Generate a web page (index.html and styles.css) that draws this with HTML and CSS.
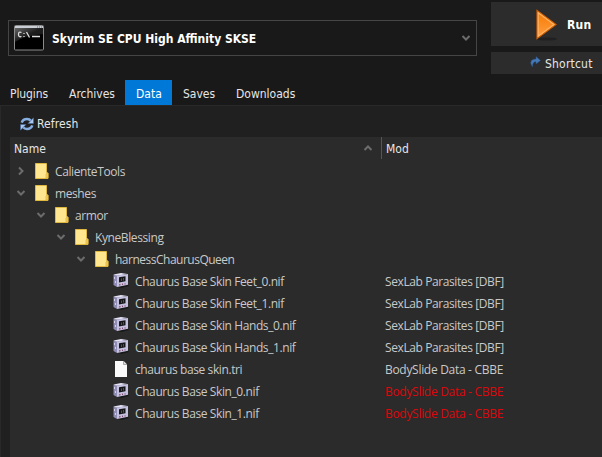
FILE: index.html
```html
<!DOCTYPE html>
<html lang="en">
<head>
  <meta charset="UTF-8">
  <meta name="viewport" content="width=device-width, initial-scale=1.0">
  <title>Data</title>
  <link rel="stylesheet" href="styles.css">
</head>
<body>
  <!-- shared icons -->
  <svg class="sprites" width="0" height="0">
    <symbol id="chevron-down" viewBox="0 0 10 8"><path d="M1.5 2 L5 5.5 L8.5 2" fill="none" stroke="currentColor" stroke-width="2"/></symbol>
    <symbol id="chevron-right" viewBox="0 0 8 10"><path d="M2 1.5 L5.5 5 L2 8.5" fill="none" stroke="currentColor" stroke-width="2"/></symbol>
    <symbol id="folder" viewBox="0 0 14 16">
      <path d="M0.5 0.5 H11.5 V9 L13 10.5 V15.5 H0.5 Z" fill="#ffe68f" stroke="#dfb83f"/>
      <path d="M11 15 V11 L12 10 H13 V15 Z" fill="#f5cf59" stroke="#dcb03a" stroke-width=".7"/>
    </symbol>
    <symbol id="nif" viewBox="0 0 16 16">
      <path d="M5 14 L15 12 L16 13 L8 15 Z" fill="#171719"/>
      <path d="M0.5 1.5 L4 2.5 V14 L0.5 12 Z" fill="#8f8bb3"/>
      <path d="M0.5 1.5 L8 0 L14.5 1 L4 2.8 Z" fill="#e4e1f5"/>
      <path d="M4 2.6 L15 1 V11.8 L4 14 Z" fill="#c4c1df"/>
      <path d="M6 4.3 L12.5 3.2 V8.3 L6 9.4 Z" fill="#141618"/>
      <path d="M8.5 8 V5.5 M10.5 7.5 V5" fill="none" stroke="#2d6b38"/>
      <path d="M6 12 L7.5 11.7 M9 11.4 L10 11.2 M11.5 11 L12.5 10.8" stroke="#7d4067" stroke-width="1.2"/>
      <path d="M1.5 4 V6 M2.5 8 V10" stroke="#d0cde9"/>
    </symbol>
    <symbol id="page" viewBox="0 0 12 16">
      <path d="M0 0 H8.5 L12 3.5 V16 H0 Z" fill="#fafafa"/>
      <path d="M8.5 0 V3.5 H12" fill="#ddd" stroke="#999" stroke-width=".8"/>
    </symbol>
  </svg>

  <div class="launcher">
    <div class="executable">
      <svg class="console-icon" viewBox="0 0 30 26">
        <defs>
          <linearGradient id="glass" x1="0" y1="0" x2="1" y2="1"><stop offset="0" stop-color="#666"/><stop offset=".5" stop-color="#1c1c1c"/></linearGradient>
        </defs>
        <rect x=".5" y=".5" width="29" height="24.5" rx="1" fill="#000" stroke="#8b8b8b"/>
        <path d="M1 3 H29 V9 Q12 10 1 17 Z" fill="url(#glass)"/>
        <rect x="1" y="1" width="28" height="2" fill="#c9ced5"/>
        <path d="M23 2 H28" stroke="#69717b" stroke-dasharray="1 1"/>
        <path d="M7.5 7.5 Q4.5 6 4.5 9.5 Q4.5 12.5 7.5 11.5 M10 8 V9 M10 11 V12 M12.5 7 L15.5 12.5 M18 11.5 H26" fill="none" stroke="#ddd" stroke-width="1.3"/>
      </svg>
      <span class="executable-name">Skyrim SE CPU High Affinity SKSE</span>
      <svg class="chevron combo-arrow"><use href="#chevron-down"/></svg>
    </div>
    <div class="actions">
      <div class="button run">
        <svg class="run-icon" viewBox="0 0 24 32">
          <defs>
            <linearGradient id="orange" x1="0" y1="0" x2="0" y2="1"><stop offset="0" stop-color="#f57900"/><stop offset="1" stop-color="#ffa044"/></linearGradient>
          </defs>
          <ellipse cx="12" cy="30" rx="10" ry="1.6" fill="#202020"/>
          <path d="M2 1.5 L21 15.5 L2 29.5 Z" fill="url(#orange)" stroke="#ce5c00" stroke-width="1.2"/>
          <path d="M3.2 3.7 L19 15.5 L3.2 27.2 Z" fill="none" stroke="#fcb46a" stroke-width="1.1"/>
        </svg>
        <span class="run-label">Run</span>
      </div>
      <div class="button shortcut">
        <svg class="shortcut-icon" viewBox="0 0 11 12"><path d="M2.5 11 Q-.5 7 1.5 4.5 Q3 2.8 6 3 V.5 L10.5 4.5 L6 8 V5.8 Q2.5 5.6 2.5 11 Z" fill="#4479b8" stroke="#2b4f7c" stroke-width=".5"/></svg>
        <span class="shortcut-label">Shortcut</span>
      </div>
    </div>
  </div>

  <div class="tabs">
    <div class="tab plugins"><span>Plugins</span></div>
    <div class="tab archives"><span>Archives</span></div>
    <div class="tab active"><span>Data</span></div>
    <div class="tab saves"><span>Saves</span></div>
    <div class="tab downloads"><span>Downloads</span></div>
  </div>

  <div class="panel">
    <div class="refresh">
      <svg class="refresh-icon" viewBox="0 0 14 14">
        <g fill="none" stroke="#86aee0" stroke-width="2.6"><path d="M1.7 5.6 Q3 2 7 2 Q9.5 2 11.2 4"/><path d="M12.3 8.4 Q11 12 7 12 Q4.5 12 2.8 10"/></g>
        <path d="M13.5 .8 V6.5 H8 Z M.5 13.2 V7.5 H6 Z" fill="#a9c8ee" stroke="#3c6396" stroke-width=".5"/>
      </svg>
      <span class="refresh-label">Refresh</span>
    </div>
    <div class="tree">
      <div class="tree-header">
        <div class="col-name"><span>Name</span><svg class="chevron sort"><use href="#chevron-down"/></svg></div>
        <div class="col-mod">Mod</div>
      </div>
      <div class="row"><div class="cell"><svg class="chevron right"><use href="#chevron-right"/></svg><svg class="folder"><use href="#folder"/></svg><span>CalienteTools</span></div></div>
      <div class="row"><div class="cell"><svg class="chevron"><use href="#chevron-down"/></svg><svg class="folder"><use href="#folder"/></svg><span>meshes</span></div></div>
      <div class="row"><div class="cell level-1"><svg class="chevron"><use href="#chevron-down"/></svg><svg class="folder"><use href="#folder"/></svg><span>armor</span></div></div>
      <div class="row"><div class="cell level-2"><svg class="chevron"><use href="#chevron-down"/></svg><svg class="folder"><use href="#folder"/></svg><span>KyneBlessing</span></div></div>
      <div class="row"><div class="cell level-3"><svg class="chevron"><use href="#chevron-down"/></svg><svg class="folder"><use href="#folder"/></svg><span class="long">harnessChaurusQueen</span></div></div>
      <div class="row"><div class="cell file"><svg class="nif"><use href="#nif"/></svg><span>Chaurus Base Skin Feet_0.nif</span></div><div class="mod">SexLab Parasites [DBF]</div></div>
      <div class="row"><div class="cell file"><svg class="nif"><use href="#nif"/></svg><span>Chaurus Base Skin Feet_1.nif</span></div><div class="mod">SexLab Parasites [DBF]</div></div>
      <div class="row"><div class="cell file"><svg class="nif"><use href="#nif"/></svg><span>Chaurus Base Skin Hands_0.nif</span></div><div class="mod">SexLab Parasites [DBF]</div></div>
      <div class="row"><div class="cell file"><svg class="nif"><use href="#nif"/></svg><span>Chaurus Base Skin Hands_1.nif</span></div><div class="mod">SexLab Parasites [DBF]</div></div>
      <div class="row"><div class="cell file"><svg class="page"><use href="#page"/></svg><span>chaurus base skin.tri</span></div><div class="mod bodyslide">BodySlide Data - CBBE</div></div>
      <div class="row"><div class="cell file"><svg class="nif"><use href="#nif"/></svg><span>Chaurus Base Skin_0.nif</span></div><div class="mod bodyslide conflict">BodySlide Data - CBBE</div></div>
      <div class="row"><div class="cell file"><svg class="nif"><use href="#nif"/></svg><span>Chaurus Base Skin_1.nif</span></div><div class="mod bodyslide conflict">BodySlide Data - CBBE</div></div>
    </div>
  </div>
</body>
</html>
```

FILE: styles.css
```css
* { box-sizing: border-box; }
body { margin: 0; width: 602px; height: 457px; overflow: hidden; display: flex; flex-direction: column; background: #191919; color: #e6e6e6; font: 12px/22px "DejaVu Sans Condensed", "Noto Sans", sans-serif; white-space: nowrap; }
svg { display: block; flex: none; }
.sprites { position: absolute; }
.chevron { width: 10px; height: 8px; color: #6c6c6c; }

.launcher { display: flex; height: 80px; padding-left: 8px; }
.executable { display: flex; align-items: center; width: 469px; height: 36px; margin-top: 20px; padding: 0 5px; border: 1px solid #454545; }
.console-icon { width: 30px; height: 26px; margin-top: -1px; }
.executable-name { margin: 2px 0 0 8px; color: #fff; font-weight: bold; }
.combo-arrow { margin-left: auto; }
.actions { display: flex; flex-direction: column; gap: 6px; width: 111px; margin-left: 14px; padding-top: 2px; }
.button { display: flex; align-items: center; background: #2c2c2c; }
.run { height: 44px; padding-left: 44px; }
.run-icon { width: 24px; height: 32px; margin-top: 1px; }
.run-label { margin: 2px 0 0 8px; color: #fff; font-weight: bold; letter-spacing: .3px; }
.shortcut { height: 22px; padding-left: 39px; }
.shortcut-icon { width: 11px; height: 12px; margin-top: -2px; }
.shortcut-label { margin: 2px 0 0 4px; letter-spacing: .2px; }

.tabs { display: flex; height: 25px; }
.tab { line-height: 28px; }
.plugins { width: 69px; padding-left: 10px; letter-spacing: -.1px; }
.archives { width: 56px; }
.active { width: 47px; padding-left: 11px; background: #0078d7; color: #fff; }
.saves { width: 64px; padding-left: 11px; }

.panel { flex: 1; display: flex; flex-direction: column; padding-left: 9px; border: solid #292929; border-width: 1px 0 0 1px; background: #202020; }
.refresh { display: flex; align-items: center; height: 31px; padding: 5px 0 0 10px; }
.refresh-icon { width: 14px; height: 14px; }
.refresh-label { margin-left: 3px; letter-spacing: .1px; }
.tree { flex: 1; background: #2b2b2b; color: #c9c9c9; font-family: "Open Sans", "Noto Sans", sans-serif; letter-spacing: -.4px; }
.tree-header { display: flex; height: 22px; margin-bottom: 1px; color: #e6e6e6; font-family: "DejaVu Sans Condensed", "Noto Sans", sans-serif; letter-spacing: 0; line-height: 24px; }
.col-name { display: flex; align-items: center; justify-content: space-between; width: 371px; padding: 0 8px 0 4px; }
.col-name span { margin-top: 2px; }
.sort { transform: rotate(180deg); }
.col-mod { padding-left: 4px; border-left: 1px solid #555; }
.row { display: flex; height: 22px; line-height: 23px; }
.cell { display: flex; align-items: center; width: 375px; padding-left: 6px; }
.cell span { margin-left: 6px; }
.cell .long { letter-spacing: -.5px; }
.right { width: 8px; height: 10px; margin: 0 1px; }
.folder { width: 14px; height: 16px; margin-left: 9px; }
.level-1 { padding-left: 26px; }
.level-2 { padding-left: 46px; }
.level-3 { padding-left: 66px; }
.file { padding-left: 103px; }
.nif { width: 16px; height: 16px; }
.page { width: 12px; height: 16px; margin: 0 2px; }
.bodyslide { letter-spacing: -.3px; }
.conflict { color: #dc080c; }
```
